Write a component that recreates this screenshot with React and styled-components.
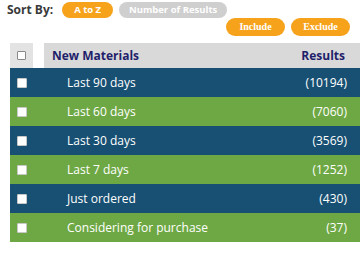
import React from 'react';
import styled, { createGlobalStyle } from 'styled-components';

const GlobalStyle = createGlobalStyle`
  html, body {
    margin: 0;
    padding: 0;
    background: #ffffff;
    font-family: "Open Sans", "Liberation Sans", sans-serif;
  }
`;

const Page = styled.div`
  width: 360px;
  height: 255px;
  overflow: hidden;
`;

const SortBar = styled.div`
  display: flex;
  align-items: center;
  height: 17px;
  padding: 1px 0 0 7px;
`;

const SortLabel = styled.span`
  font-size: 12px;
  font-weight: 700;
  color: #3a3a3a;
  margin-right: 9px;
  line-height: 16px;
`;

const Pill = styled.button`
  border: none;
  border-radius: 9px;
  height: 16px;
  padding: 0;
  width: ${p => p.$w}px;
  margin-right: 6px;
  background: ${p => (p.$active ? '#f7a21b' : '#cfcfcf')};
  color: #ffffff;
  font-family: ${p => (p.$serif ? '"Liberation Serif", serif' : '"Open Sans", "Liberation Sans", sans-serif')};
  font-size: ${p => (p.$serif ? 10 : 9.5)}px;
  font-weight: 700;
  line-height: 16px;
  cursor: pointer;
`;

const FilterBar = styled.div`
  display: flex;
  justify-content: flex-end;
  padding: 0 4px 0 0;
  height: 18px;
  & > button {
    height: 18px;
    line-height: 18px;
  }
`;

const Table = styled.div`
  margin: 7px 0 0 10px;
  width: 350px;
`;

const HeadRow = styled.div`
  display: grid;
  grid-template-columns: 23px 11px 1fr auto;
  height: 25px;
  align-items: stretch;
`;

const HeadCheckCell = styled.div`
  background: #e3e3e3;
  display: flex;
  align-items: center;
  justify-content: center;
`;

const HeadGap = styled.div`
  background: #ffffff;
`;

const HeadTitle = styled.div`
  background: #d9d9d9;
  color: #1f1f6b;
  font-size: 12px;
  font-weight: 700;
  display: flex;
  align-items: center;
  padding-left: 8px;
`;

const HeadResults = styled(HeadTitle)`
  padding-left: 0;
  padding-right: 15px;
`;

const Box = styled.span`
  display: inline-block;
  width: ${p => (p.$small ? 9 : 10)}px;
  height: ${p => (p.$small ? 9 : 10)}px;
  background: #ffffff;
  border: 1px solid ${p => (p.$small ? '#8a8a8a' : '#c8c8c8')};
  box-sizing: border-box;
  border-radius: 1px;
`;

const Row = styled.div`
  display: grid;
  grid-template-columns: 57px 1fr auto;
  align-items: center;
  height: 29px;
  background: ${p => (p.$alt ? '#6ea844' : '#175072')};
  color: #ffffff;
  font-size: 12px;
`;

const RowCheck = styled.div`
  padding-left: 7px;
  display: flex;
  align-items: center;
`;

const Count = styled.span`
  padding-right: 13px;
`;

const rows = [
  { label: 'Last 90 days', count: 10194 },
  { label: 'Last 60 days', count: 7060 },
  { label: 'Last 30 days', count: 3569 },
  { label: 'Last 7 days', count: 1252 },
  { label: 'Just ordered', count: 430 },
  { label: 'Considering for purchase', count: 37 },
];

export default function App() {
  return (
    <Page>
      <GlobalStyle />
      <SortBar>
        <SortLabel>Sort By:</SortLabel>
        <Pill $active $w={51}>A to Z</Pill>
        <Pill $w={108}>Number of Results</Pill>
      </SortBar>
      <FilterBar>
        <Pill $active $serif $w={59}>Include</Pill>
        <Pill $active $serif $w={59}>Exclude</Pill>
      </FilterBar>
      <Table>
        <HeadRow>
          <HeadCheckCell><Box $small /></HeadCheckCell>
          <HeadGap />
          <HeadTitle>New Materials</HeadTitle>
          <HeadResults>Results</HeadResults>
        </HeadRow>
        {rows.map((r, i) => (
          <Row key={r.label} $alt={i % 2 === 1}>
            <RowCheck><Box /></RowCheck>
            <span>{r.label}</span>
            <Count>({r.count})</Count>
          </Row>
        ))}
      </Table>
    </Page>
  );
}
